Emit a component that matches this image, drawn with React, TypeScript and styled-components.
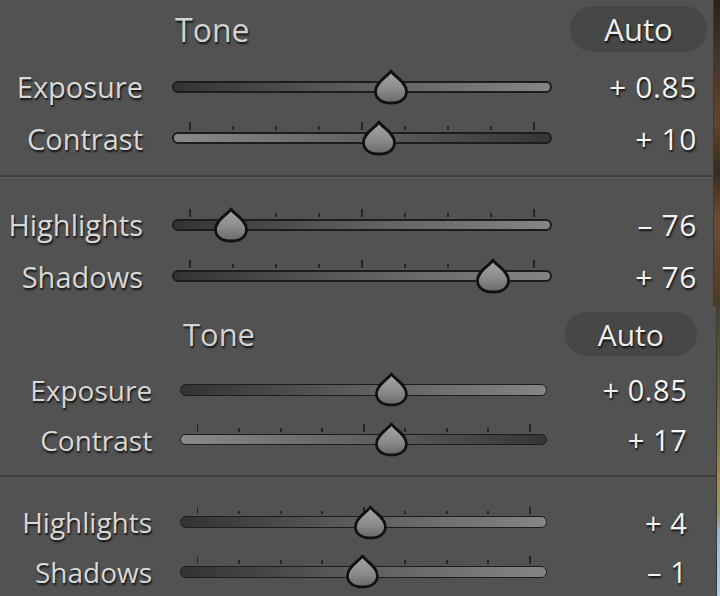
import React, { useId } from "react";
import styled, { createGlobalStyle } from "styled-components";

const GlobalStyle = createGlobalStyle`
  html, body {
    margin: 0;
    padding: 0;
    background: #525252;
  }
  body {
    width: 720px;
    height: 596px;
    overflow: hidden;
    font-family: "Open Sans", "DejaVu Sans", sans-serif;
  }
`;

const textShadow = "1px 2px 2px rgba(0, 0, 0, 0.8)";

const Page = styled.div`
  display: flex;
  flex-direction: column;
  width: 720px;
  height: 596px;
  overflow: hidden;
`;

const Panel = styled.section<{ $h: number }>`
  display: flex;
  height: ${(p) => p.$h}px;
  flex: none;
`;

const Body = styled.div`
  flex: 1;
  background: #525252;
  overflow: hidden;
`;

const Strip = styled.div<{ $w: number; $bg: string }>`
  width: ${(p) => p.$w}px;
  flex: none;
  background: ${(p) => p.$bg};
  border-left: 1px solid #3a3a3a;
`;

const Content = styled.div<{ $scale: number }>`
  zoom: ${(p) => p.$scale};
`;

const Group = styled.div<{ $pad: number }>`
  width: 714px;
  padding-left: ${(p) => p.$pad}px;
`;

const Header = styled.div`
  display: flex;
  align-items: center;
  height: 58px;
  margin-bottom: 3px;
  padding: 0 7px 0 175px;
`;

const Title = styled.h2`
  margin: 0;
  font-weight: 400;
  font-size: 32px;
  color: #d2d2d2;
  text-shadow: ${textShadow};
`;

const AutoButton = styled.button`
  margin-left: auto;
  width: 137px;
  height: 46px;
  border: none;
  border-radius: 23px;
  background: #474747;
  color: #eeeeee;
  font-family: inherit;
  font-size: 31px;
  padding: 0;
  display: flex;
  align-items: center;
  justify-content: center;
  text-shadow: ${textShadow};
`;

const Row = styled.div`
  display: grid;
  grid-template-columns: 143px 380px 1fr;
  column-gap: 29px;
  align-items: center;
  height: 51.5px;
`;

const Label = styled.span`
  text-align: right;
  font-size: 29px;
  color: #d8d8d8;
  white-space: nowrap;
  text-shadow: ${textShadow};
`;

const Value = styled.span`
  text-align: right;
  padding-right: 17px;
  font-size: 30px;
  letter-spacing: 0.6px;
  color: #f4f4f4;
  white-space: nowrap;
  text-shadow: ${textShadow};
`;

const Slider = styled.div`
  position: relative;
  height: 12px;
`;

const Track = styled.div<{ $dir: "up" | "down" }>`
  height: 12px;
  box-sizing: border-box;
  border: 2px solid #1d1d1d;
  border-radius: 6px;
  background: ${(p) =>
    p.$dir === "up"
      ? "linear-gradient(to right, #333333, #5a5a5a 45%, #858585)"
      : "linear-gradient(to right, #8a8a8a, #5c5c5c 55%, #353535)"};
`;

const Range = styled.div`
  position: absolute;
  top: 0;
  bottom: 0;
  left: 18px;
  right: 18px;
`;

const Ticks = styled.div`
  position: absolute;
  left: -1px;
  right: -1px;
  bottom: calc(100% + 2px);
  display: flex;
  justify-content: space-between;
  align-items: flex-end;
`;

const Tick = styled.span<{ $tall: boolean }>`
  width: 2px;
  height: ${(p) => (p.$tall ? 8 : 4)}px;
  background: #262626;
`;

const ThumbSvg = styled.svg`
  position: absolute;
  top: -11px;
  width: 34px;
  height: 34px;
  margin-left: -17px;
  overflow: visible;
`;

const Divider = styled.div`
  height: 2px;
  margin: 11px 0 20px;
  background: #3e3e3e;
  border-bottom: 2px solid #585858;
`;

type SliderDef = {
  label: string;
  value: number;
  display: string;
  min: number;
  max: number;
  ticks: boolean;
  dir: "up" | "down";
};

function Thumb({ pct }: { pct: number }) {
  const id = useId().replace(/:/g, "");
  return (
    <ThumbSvg viewBox="0 0 34 34" style={{ left: `${pct}%` }}>
      <defs>
        <linearGradient id={`g${id}`} x1="0" y1="0" x2="0" y2="1">
          <stop offset="0" stopColor="#a6a6a6" />
          <stop offset="0.55" stopColor="#8c8c8c" />
          <stop offset="1" stopColor="#686868" />
        </linearGradient>
      </defs>
      <path
        d="M17 1 C19.5 6 32.5 11.5 32.5 21.5 C32.5 29 26 33 17 33 C8 33 1.5 29 1.5 21.5 C1.5 11.5 14.5 6 17 1 Z"
        fill={`url(#g${id})`}
        stroke="#111111"
        strokeWidth="2.8"
        strokeLinejoin="round"
      />
    </ThumbSvg>
  );
}

function SliderRow({ s }: { s: SliderDef }) {
  const pct = ((s.value - s.min) / (s.max - s.min)) * 100;
  return (
    <Row>
      <Label>{s.label}</Label>
      <Slider>
        <Track $dir={s.dir} />
        <Range>
          {s.ticks && (
            <Ticks>
              {Array.from({ length: 9 }, (_, i) => (
                <Tick key={i} $tall={i === 0 || i === 4 || i === 8} />
              ))}
            </Ticks>
          )}
          <Thumb pct={pct} />
        </Range>
      </Slider>
      <Value>{s.display}</Value>
    </Row>
  );
}

type PanelDef = {
  height: number;
  scale: number;
  inset: number;
  stripW: number;
  stripBg: string;
  tone: SliderDef[];
  presence: SliderDef[];
};

const mk = (
  label: string,
  value: number,
  display: string,
  dir: "up" | "down",
  exposure = false
): SliderDef => ({
  label,
  value,
  display,
  min: exposure ? -5 : -100,
  max: exposure ? 5 : 100,
  ticks: !exposure,
  dir,
});

const panels: PanelDef[] = [
  {
    height: 306,
    scale: 1,
    inset: 0,
    stripW: 6,
    stripBg:
      "linear-gradient(to bottom, #2a221c 0%, #45342a 18%, #5e4630 40%, #3a2a1e 56%, #6a4e34 72%, #4c3a2a 100%)",
    tone: [
      mk("Exposure", 0.85, "+ 0.85", "up", true),
      mk("Contrast", 10, "+ 10", "down"),
    ],
    presence: [
      mk("Highlights", -76, "– 76", "up"),
      mk("Shadows", 76, "+ 76", "up"),
    ],
  },
  {
    height: 290,
    scale: 0.966,
    inset: 14,
    stripW: 3,
    stripBg:
      "linear-gradient(to bottom, #4a4030 0%, #6a5e3a 30%, #a09050 62%, #9a9860 72%, #9ab8d0 78%, #b8d0e4 100%)",
    tone: [
      mk("Exposure", 0.85, "+ 0.85", "up", true),
      mk("Contrast", 17, "+ 17", "down"),
    ],
    presence: [
      mk("Highlights", 4, "+ 4", "up"),
      mk("Shadows", -1, "– 1", "up"),
    ],
  },
];

export default function App() {
  return (
    <>
      <GlobalStyle />
      <Page>
        {panels.map((p, i) => {
          const pad = p.inset / p.scale;
          return (
            <Panel key={i} $h={p.height}>
              <Body>
                <Content $scale={p.scale}>
                  <Group $pad={pad}>
                    <Header>
                      <Title>Tone</Title>
                      <AutoButton type="button">Auto</AutoButton>
                    </Header>
                    {p.tone.map((s) => (
                      <SliderRow key={s.label} s={s} />
                    ))}
                  </Group>
                  <Divider />
                  <Group $pad={pad}>
                    {p.presence.map((s) => (
                      <SliderRow key={s.label} s={s} />
                    ))}
                  </Group>
                </Content>
              </Body>
              <Strip $w={p.stripW} $bg={p.stripBg} />
            </Panel>
          );
        })}
      </Page>
    </>
  );
}
